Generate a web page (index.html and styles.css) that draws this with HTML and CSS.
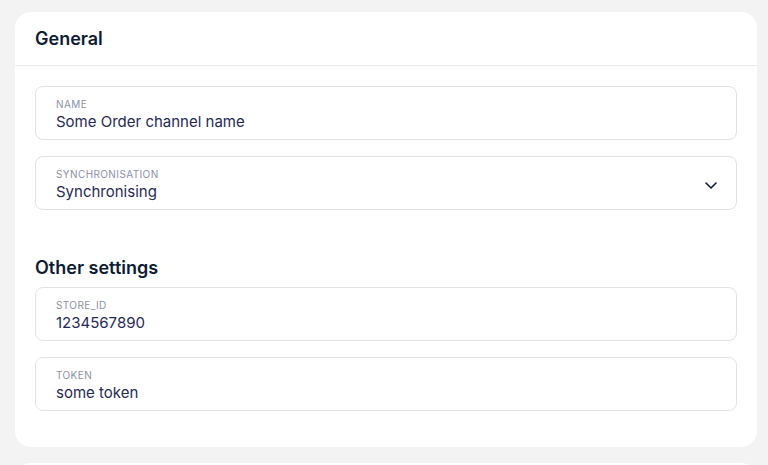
FILE: index.html
```html
<!DOCTYPE html>
<html lang="en">
<head>
<meta charset="utf-8">
<title>General settings</title>
<link rel="stylesheet" href="styles.css">
</head>
<body>
<div class="page">
  <section class="card">
    <header class="card-header">
      <h2 class="card-title">General</h2>
    </header>
    <div class="card-body">
      <div class="field">
        <span class="field-label">NAME</span>
        <span class="field-value">Some Order channel name</span>
      </div>
      <div class="field field-select">
        <div class="field-text">
          <span class="field-label">SYNCHRONISATION</span>
          <span class="field-value">Synchronising</span>
        </div>
        <svg class="chevron" width="12" height="7" viewBox="0 0 12 7" aria-hidden="true">
          <path d="M1 1l5 5 5-5" fill="none" stroke="#0f1d3a" stroke-width="1.6" stroke-linecap="round" stroke-linejoin="round"/>
        </svg>
      </div>
      <h3 class="section-title">Other settings</h3>
      <div class="field">
        <span class="field-label">STORE_ID</span>
        <span class="field-value">1234567890</span>
      </div>
      <div class="field">
        <span class="field-label">TOKEN</span>
        <span class="field-value">some token</span>
      </div>
    </div>
  </section>
  <section class="card card-next"></section>
</div>
</body>
</html>
```
FILE: styles.css
```css
html, body {
  margin: 0;
  padding: 0;
  background: #f3f3f3;
  font-family: Inter, "Liberation Sans", sans-serif;
  overflow: hidden;
}
.page {
  padding: 12px 11px 0 15px;
  display: flex;
  flex-direction: column;
  gap: 16px;
}
.card {
  background: #ffffff;
  border-radius: 16px;
}
.card-next {
  height: 60px;
}
.card-header {
  height: 53px;
  border-bottom: 1px solid #ebebeb;
  padding: 0 20px;
  display: flex;
  align-items: center;
}
.card-title, .section-title {
  margin: 0;
  font-size: 18px;
  line-height: 24px;
  font-weight: 600;
  color: #0c1b36;
}
.card-body {
  padding: 20px 20px 36px;
  display: flex;
  flex-direction: column;
  gap: 16px;
}
.section-title {
  margin-top: 30px;
  margin-bottom: -9px;
}
.field {
  border: 1px solid #e3e3e3;
  border-radius: 8px;
  padding: 10px 20px 7px;
  display: flex;
  flex-direction: column;
}
.field-select {
  flex-direction: row;
  align-items: center;
  justify-content: space-between;
}
.field-text {
  display: flex;
  flex-direction: column;
}
.field-label {
  font-size: 10px;
  line-height: 14px;
  color: #8c8fa9;
  letter-spacing: 0.4px;
}
.field-value {
  margin-top: 1px;
  font-size: 15px;
  line-height: 20px;
  color: #1f2a57;
}
.chevron {
  margin-right: -1px;
  margin-top: 2px;
}
```
